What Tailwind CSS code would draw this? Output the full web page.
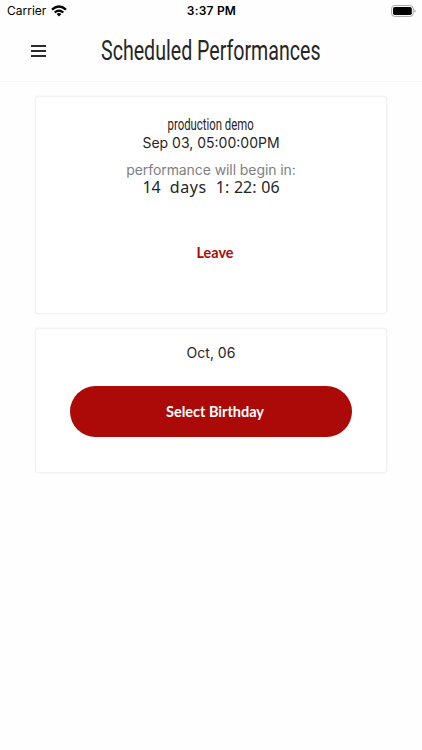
<!DOCTYPE html>
<html lang="en">
<head>
  <meta charset="UTF-8" />
  <title>Scheduled Performances</title>
  <script src="https://cdn.jsdelivr.net/npm/@tailwindcss/browser@4"></script>
</head>
<body class="h-[750px] overflow-hidden bg-[#fefefe] font-['Inter',sans-serif] text-[#262626]">

  <!-- Status bar -->
  <div class="grid h-[22px] grid-cols-3 items-center pl-[7px] pr-[6px] text-black">
    <div class="flex items-center gap-[5px]">
      <span class="text-[12px] leading-[22px]">Carrier</span>
      <svg class="h-[12px] w-[16px]" viewBox="0 0 16 12" fill="none" stroke="#000" stroke-width="2.2">
        <path d="M1 4.6Q8-1.6 15 4.6" />
        <path d="M3.7 7.5Q8 3.7 12.3 7.5" />
        <path d="M5.6 9Q8 7.2 10.4 9L8 11.5Z" fill="#000" stroke="none" />
      </svg>
    </div>
    <span class="text-center text-[12px] font-semibold leading-[22px] tracking-[0.2px]">3:37 PM</span>
    <svg class="h-[12px] w-[25px] justify-self-end" viewBox="0 0 25 12">
      <rect x="0.6" y="0.6" width="21.6" height="10.8" rx="3" fill="#fff" stroke="#a5a5a5" />
      <rect x="2" y="2" width="18.8" height="8" rx="1.8" fill="#000" />
      <path d="M23.4 4.2q1.3.6 1.3 1.8t-1.3 1.8z" fill="#a5a5a5" />
    </svg>
  </div>

  <!-- Header -->
  <header class="grid h-[60px] grid-cols-[76px_minmax(0,1fr)_76px] items-center border-b border-[#f7f7f7]">
    <button type="button" aria-label="Menu" class="ml-[31px] mt-[-2px] flex w-[15px] flex-col gap-[3px]">
      <span class="h-[2px] bg-[#2b2b2b]"></span>
      <span class="h-[2px] bg-[#2b2b2b]"></span>
      <span class="h-[2px] bg-[#2b2b2b]"></span>
    </button>
    <h1 class="flex justify-center whitespace-nowrap pb-[2px] font-['Roboto',sans-serif] text-[28px] leading-[40px]">
      <span class="inline-block scale-x-[0.7]">Scheduled Performances</span>
    </h1>
  </header>

  <main class="flex flex-col gap-[14px] px-[35px] pt-[14px]">

    <!-- Performance card -->
    <section class="flex h-[218px] flex-col items-center rounded-[3px] border border-[#f2f2f2] bg-white pt-[18px] shadow-[0_0_2px_#ececec]">
      <h2 class="font-['Roboto',sans-serif] text-[16px] leading-[19px]">
        <span class="inline-block scale-x-[0.71]">production demo</span>
      </h2>
      <p class="text-[14px] leading-[18px]">Sep 03, 05:00:00PM</p>
      <p class="mt-[9px] text-[14px] leading-[18px] tracking-[-0.08px] text-[#808080]">performance will begin in:</p>
      <p class="-mt-px flex gap-[9px] font-['Noto_Sans',sans-serif] text-[16px] leading-[18px]">
        <span>14</span>
        <span class="tracking-[0.6px]">days</span>
        <span class="flex"><span>1</span><span class="w-[9px]">:</span><span>22</span><span class="w-[9px]">:</span><span>06</span></span>
      </p>
      <button type="button" class="mt-[47px] pl-[8px] font-['Lato',sans-serif] text-[14.4px] font-bold leading-[20px] text-[#ab0a08]">Leave</button>
    </section>

    <!-- Birthday card -->
    <section class="flex h-[145px] flex-col items-center rounded-[3px] border border-[#f2f2f2] bg-white px-[34px] pt-[14px] shadow-[0_0_2px_#ececec]">
      <p class="text-[14px] leading-[20px]">Oct, 06</p>
      <button type="button" class="mt-[23px] h-[51px] w-full rounded-full bg-[#ab0a08] pl-[8px] font-['Lato',sans-serif] text-[14.5px] font-bold text-white">Select Birthday</button>
    </section>

  </main>

</body>
</html>
